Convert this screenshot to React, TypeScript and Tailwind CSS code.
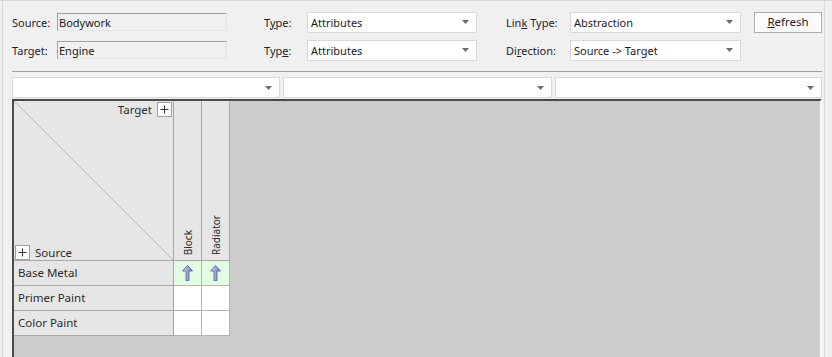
import React from "react";

const font = { fontFamily: '"Noto Sans", "DejaVu Sans", sans-serif' };

function Caret() {
  return (
    <svg width="7" height="4" viewBox="0 0 7 4" className="shrink-0">
      <polygon points="0,0 7,0 3.5,4" fill="#6d6d6d" />
    </svg>
  );
}

function Select({ value, w }: { value: string; w: string }) {
  return (
    <div className={`${w} h-[21px] bg-white border border-[#d9d9d9] flex items-center pl-[3px] pr-[7px] box-border`}>
      <span className="flex-1 text-[11px] text-[#1a1a1a] leading-none">{value}</span>
      <Caret />
    </div>
  );
}

function Field({ value }: { value: string }) {
  return (
    <div className="w-[170px] h-[18px] bg-[#f0f0f0] border-t border-l border-[#a0a0a0] border-r border-b border-r-[#e3e3e3] border-b-[#e3e3e3] box-border flex items-center pl-[1px]">
      <span className="text-[11px] text-[#1a1a1a] leading-none">{value}</span>
    </div>
  );
}

function Label({ w, children }: { w: string; children: React.ReactNode }) {
  return <div className={`${w} text-[11px] text-[#1e1e2a] leading-none shrink-0`}>{children}</div>;
}

function UpArrow() {
  return (
    <svg width="11" height="16" viewBox="0 0 11 16">
      <defs>
        <linearGradient id="ag" x1="0" x2="1" y1="0" y2="0">
          <stop offset="0" stopColor="#d6def5" />
          <stop offset="0.5" stopColor="#9aa9d8" />
          <stop offset="1" stopColor="#6b7bb5" />
        </linearGradient>
      </defs>
      <polygon
        points="5.5,0.5 10.5,6 7,6 7,15.5 4,15.5 4,6 0.5,6"
        fill="url(#ag)"
        stroke="#5a6a9e"
        strokeWidth="0.9"
        strokeLinejoin="round"
      />
    </svg>
  );
}

function PlusBox() {
  return (
    <div className="w-[15px] h-[15px] bg-white border border-[#a0a0a0] box-border flex items-center justify-center">
      <svg width="9" height="9" viewBox="0 0 9 9">
        <path d="M4.5 0.5v8M0.5 4.5h8" stroke="#303030" strokeWidth="1" />
      </svg>
    </div>
  );
}

function RowHeader({ children }: { children: React.ReactNode }) {
  return (
    <div className="w-[160px] h-[25px] bg-[#e6e6e6] border-r border-b border-[#a8a8a8] box-border flex items-center pl-[4px] text-[11.5px] text-[#2a2a2a]">
      {children}
    </div>
  );
}

function Cell({ green, arrow }: { green?: boolean; arrow?: boolean }) {
  return (
    <div
      className={`w-[28px] h-[25px] border-r border-b border-[#b4b4b4] box-border flex items-center justify-center ${
        green ? "bg-[#e2fce2]" : "bg-white"
      }`}
    >
      {arrow ? <UpArrow /> : null}
    </div>
  );
}

function ColHeader({ text }: { text: string }) {
  return (
    <div className="w-[28px] h-[160px] bg-[#e6e6e6] border-r border-b border-[#a8a8a8] box-border flex items-end justify-center pb-[5px]">
      <span className="text-[10px] text-[#2a2a2a] leading-none whitespace-nowrap [writing-mode:vertical-rl] rotate-180">
        {text}
      </span>
    </div>
  );
}

export default function App() {
  return (
    <div style={font} className="w-[832px] h-[357px] bg-[#f0f0f0] overflow-hidden border-t border-[#d5d5d5] box-border">
      <div className="ml-[2px] w-[823px] h-full border-l border-r border-[#d8d8d8] box-border">
        <div className="pl-[9px] pt-[10px]">
          <div className="flex items-center h-[22px]">
            <Label w="w-[45px]">Source:</Label>
            <Field value="Bodywork" />
            <div className="w-[37px]" />
            <Label w="w-[43px]">
              T<span className="underline">y</span>pe:
            </Label>
            <Select value="Attributes" w="w-[170px]" />
            <div className="w-[29px]" />
            <Label w="w-[64px]">
              Lin<span className="underline">k</span> Type:
            </Label>
            <Select value="Abstraction" w="w-[171px]" />
            <div className="w-[13px]" />
            <div className="w-[68px] h-[21px] bg-[#fbfbfb] border border-[#adadad] box-border flex items-center justify-center text-[11.5px] text-[#1a1a1a] leading-none">
              <span className="underline">R</span>efresh
            </div>
          </div>
          <div className="flex items-center h-[22px] mt-[6px]">
            <Label w="w-[45px]">Target:</Label>
            <Field value="Engine" />
            <div className="w-[37px]" />
            <Label w="w-[43px]">
              Typ<span className="underline">e</span>:
            </Label>
            <Select value="Attributes" w="w-[170px]" />
            <div className="w-[29px]" />
            <Label w="w-[64px]">
              Di<span className="underline">r</span>ection:
            </Label>
            <Select value="Source -> Target" w="w-[171px]" />
          </div>
          <div className="mt-[10px] w-[810px] h-[1px] bg-[#a0a0a0]" />
          <div className="mt-[5px] flex gap-[3px] w-[810px]">
            <Select value="" w="w-[268px]" />
            <Select value="" w="w-[269px]" />
            <Select value="" w="w-[267px]" />
          </div>
          <div className="mt-[1px] w-[810px] h-[300px] bg-[#cccccc] border-t-2 border-l-2 border-[#4a4a4a] border-r-2 border-r-[#f8f8f8] box-border">
            <div className="flex">
              <div className="relative w-[160px] h-[160px] bg-[#e6e6e6] border-r border-b border-[#a8a8a8] box-border">
                <svg className="absolute left-0 top-0" width="159" height="159" viewBox="0 0 159 159">
                  <line x1="0" y1="0" x2="159" y2="159" stroke="#a8a8a8" strokeWidth="0.8" />
                </svg>
                <div className="absolute right-[1px] top-[1px] flex items-center gap-[5px]">
                  <span className="text-[11.5px] text-[#2a2a2a] leading-none">Target</span>
                  <PlusBox />
                </div>
                <div className="absolute left-[1px] bottom-0 flex items-center gap-[5px]">
                  <PlusBox />
                  <span className="text-[11.5px] text-[#2a2a2a] leading-none">Source</span>
                </div>
              </div>
              <ColHeader text="Block" />
              <ColHeader text="Radiator" />
            </div>
            <div className="flex">
              <RowHeader>Base Metal</RowHeader>
              <Cell green arrow />
              <Cell green arrow />
            </div>
            <div className="flex">
              <RowHeader>Primer Paint</RowHeader>
              <Cell />
              <Cell />
            </div>
            <div className="flex">
              <RowHeader>Color Paint</RowHeader>
              <Cell />
              <Cell />
            </div>
          </div>
        </div>
      </div>
    </div>
  );
}
